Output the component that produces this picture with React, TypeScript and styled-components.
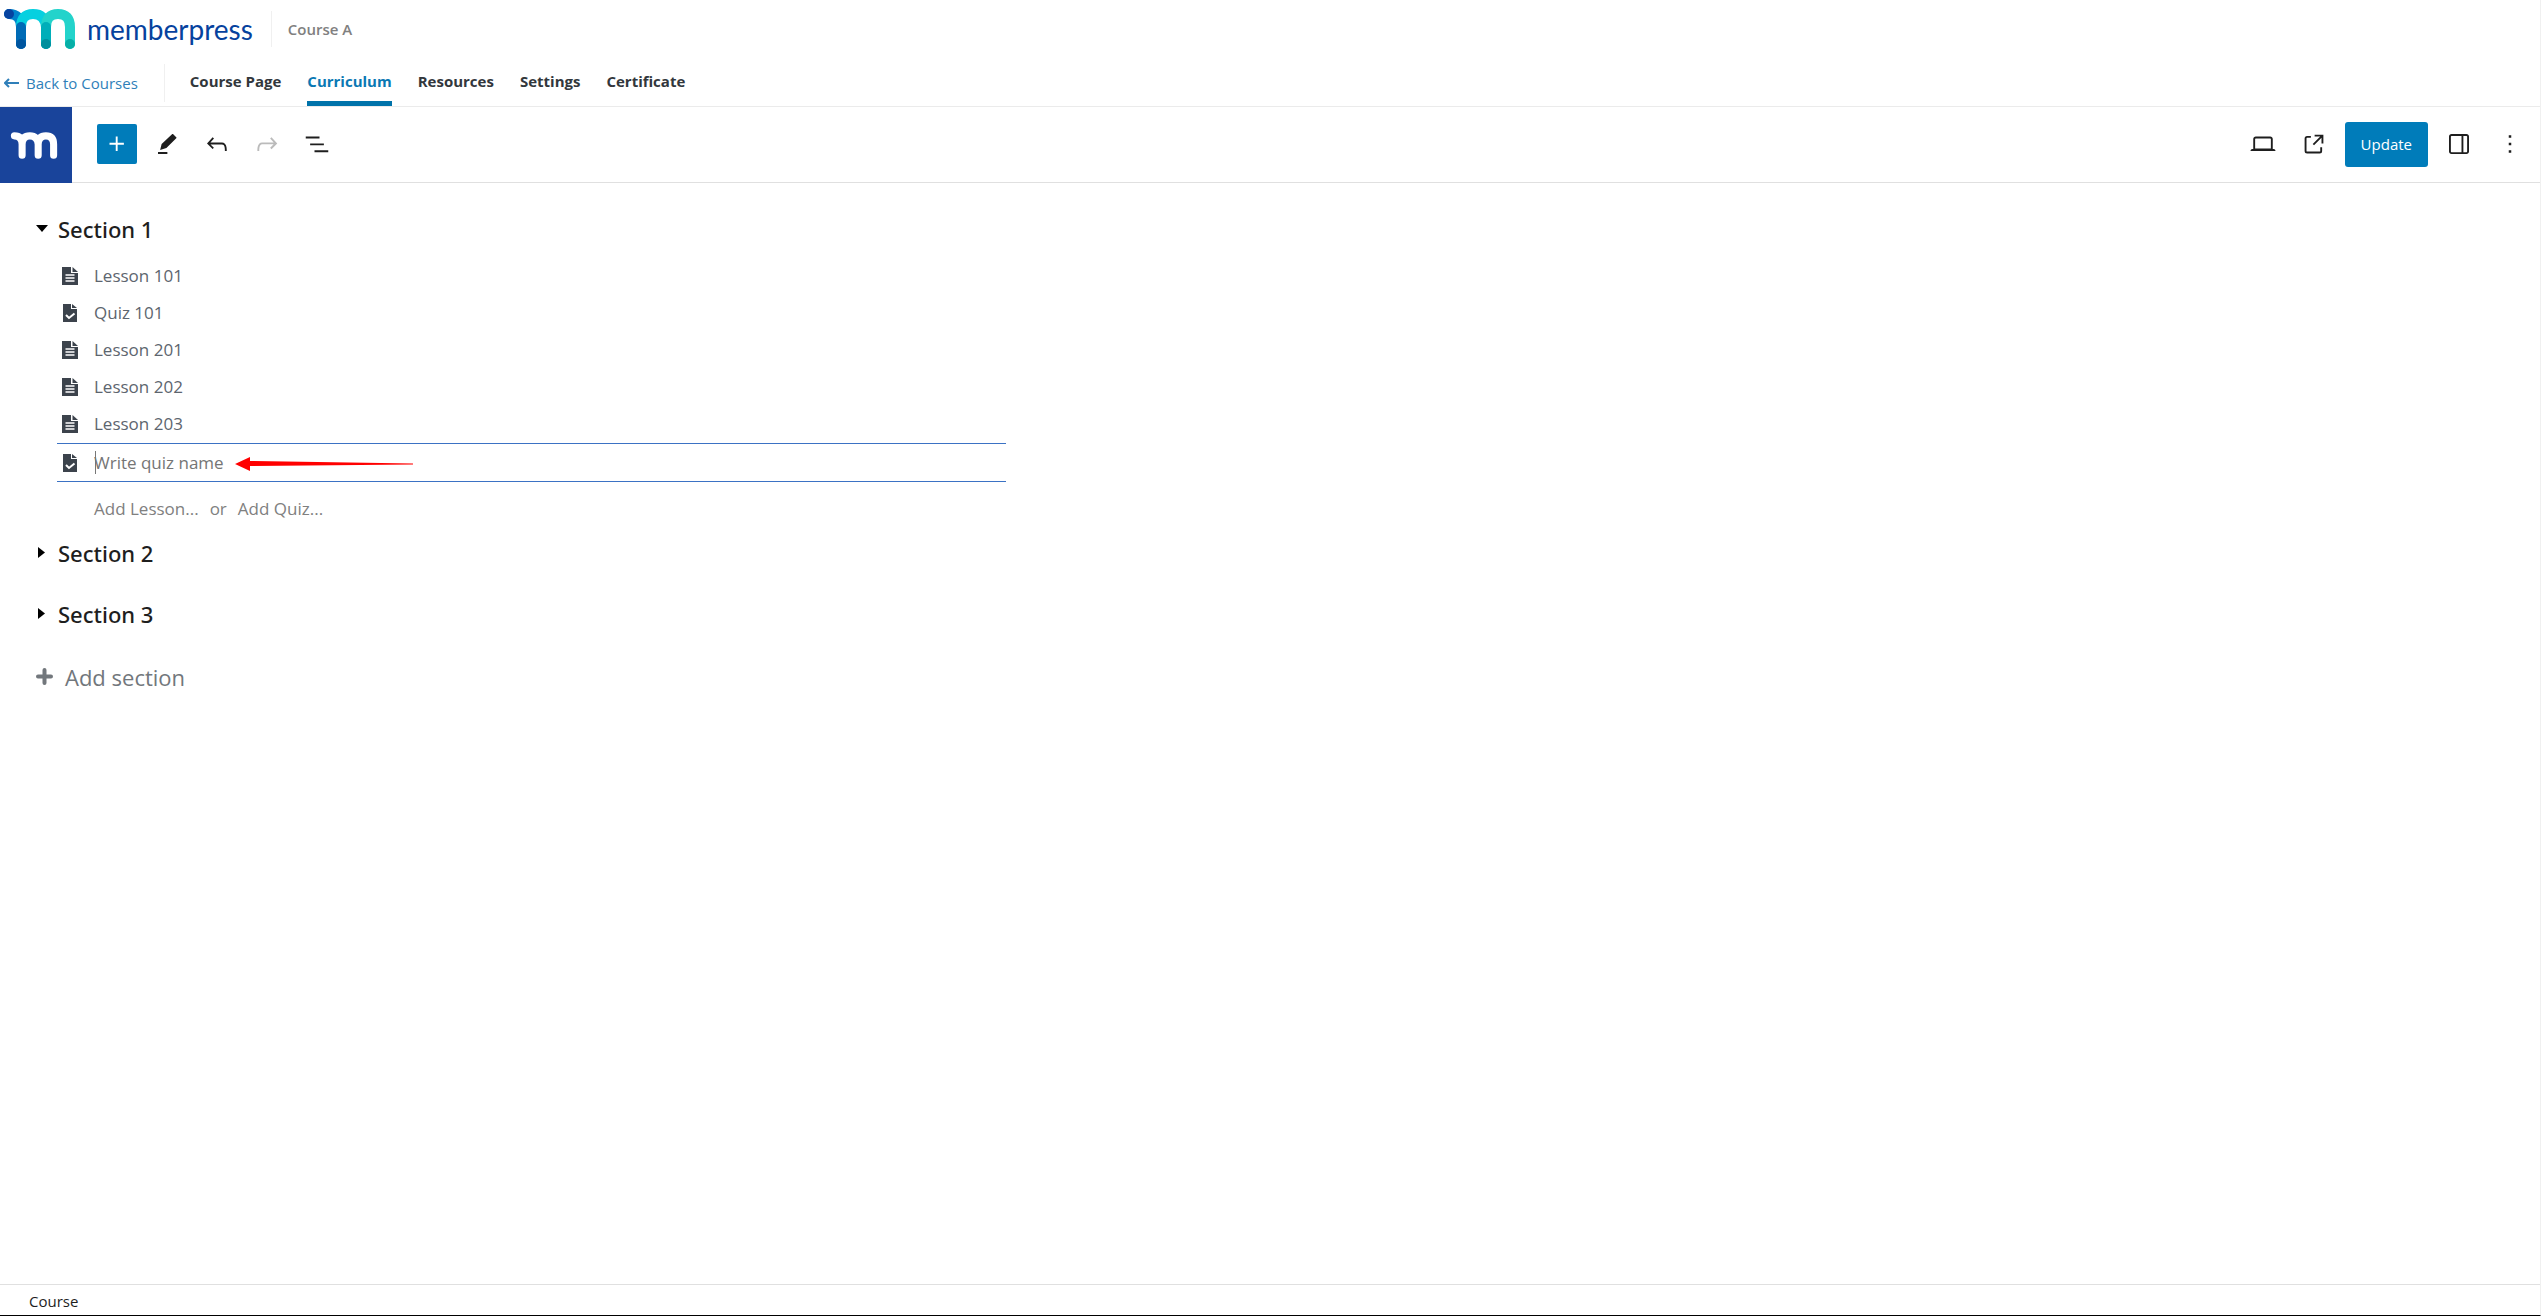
import React, { useState } from 'react';
import styled, { createGlobalStyle } from 'styled-components';

const Global = createGlobalStyle`
  * { box-sizing: border-box; }
  html, body { margin: 0; }
  body {
    background: #fff;
    color: #1e1e1e;
    font-family: 'Open Sans', 'Noto Sans', sans-serif;
    font-size: 15px;
  }
  button, input { font: inherit; }
  button { border: 0; padding: 0; background: none; color: inherit; cursor: pointer; }
  a { text-decoration: none; color: inherit; }
  svg { display: block; flex: none; }
`;

const Page = styled.div`
  display: flex;
  flex-direction: column;
  min-height: 100vh;
  border-right: 1px solid #f0f0f0;
  border-bottom: 1px solid #000;
`;

const BrandBar = styled.header`
  display: flex;
  align-items: center;
  height: 58px;
  padding-left: 3px;
`;

const Brand = styled.a`
  display: flex;
  align-items: center;
  gap: 11px;
  padding-right: 18px;
`;

const Wordmark = styled.span`
  font-family: Lato, sans-serif;
  font-size: 28px;
  line-height: 36px;
  color: #06429e;
`;

const CourseName = styled.span`
  border-left: 1px solid #f0f0f0;
  padding-left: 16px;
  font-weight: 600;
  line-height: 36px;
  color: #808080;
`;

const NavBar = styled.div`
  display: flex;
  height: 49px;
  border-bottom: 1px solid #ebebeb;
`;

const BackLink = styled.a`
  display: flex;
  align-items: center;
  gap: 7px;
  height: 38px;
  margin-top: 6px;
  padding: 0 26px 0 4px;
  border-right: 1px solid #f0f0f0;
  color: #2f7fb9;
`;

const Tabs = styled.nav`
  display: flex;
  gap: 26px;
  padding-left: 25px;
`;

const Tab = styled.a<{ $active?: boolean }>`
  border-bottom: 5px solid ${p => (p.$active ? '#0073aa' : 'transparent')};
  padding-top: 11px;
  line-height: 24px;
  font-weight: 700;
  color: ${p => (p.$active ? '#0a78b3' : '#32373c')};
`;

const Toolbar = styled.div`
  display: flex;
  align-items: flex-start;
  height: 76px;
  border-bottom: 1px solid #e0e0e0;
`;

const HomeLink = styled.a`
  display: flex;
  align-items: center;
  justify-content: center;
  width: 72px;
  height: 76px;
  padding-right: 4px;
  background: #19449b;
`;

const ToolGroup = styled.div<{ $end?: boolean }>`
  display: flex;
  align-items: center;
  height: 74px;
  gap: ${p => (p.$end ? '11px' : '10px')};
  margin-left: ${p => (p.$end ? 'auto' : '25px')};
  padding-right: ${p => (p.$end ? '10px' : '0')};
`;

const IconButton = styled.button<{ $primary?: boolean }>`
  display: flex;
  align-items: center;
  justify-content: center;
  width: 40px;
  height: 40px;
  border-radius: 2px;
  background: ${p => (p.$primary ? '#007cba' : 'none')};
  color: ${p => (p.$primary ? '#fff' : '#1e1e1e')};
  &:disabled { color: #bbb; cursor: default; }
`;

const UpdateButton = styled.button`
  height: 45px;
  padding: 0 16px;
  border-radius: 3px;
  background: #007cba;
  color: #fff;
`;

const Main = styled.main`
  flex: 1;
  padding: 27px 36px;
`;

const Curriculum = styled.div`
  max-width: 970px;
`;

const SectionHead = styled.h2<{ $open?: boolean }>`
  display: flex;
  align-items: center;
  height: 37px;
  margin: 0;
  margin-bottom: ${p => (p.$open ? '10px' : '24px')};
  font-family: 'Noto Sans', 'Open Sans', sans-serif;
  font-size: 22px;
  font-weight: 500;
`;

const Toggle = styled.button`
  display: flex;
  align-items: center;
  width: 22px;
  height: 24px;
`;

const Items = styled.ul`
  list-style: none;
  margin: 0;
  padding: 0 0 0 21px;
`;

const Item = styled.li`
  display: flex;
  align-items: center;
  gap: 16px;
  height: 37px;
  padding-left: 5px;
  font-size: 17px;
  color: #5d656e;
`;

const EditItem = styled(Item)`
  position: relative;
  height: 39px;
  margin-top: 1px;
  border: solid #3b72c4;
  border-width: 1px 0;
`;

const NameInput = styled.input`
  flex: 1;
  height: 37px;
  border: 0;
  outline: 0;
  padding: 0;
  background: linear-gradient(#777, #777) 1px 7px / 1px 23px no-repeat;
  color: #555d66;
  caret-color: transparent;
  &::placeholder { color: #757575; opacity: 1; }
`;

const Pointer = styled.svg`
  position: absolute;
  left: 178px;
  top: 11px;
`;

const AddRow = styled.div`
  display: flex;
  align-items: center;
  gap: 11px;
  height: 52px;
  padding-left: 58px;
  font-size: 17px;
  color: #808080;
`;

const AddSection = styled.button`
  display: flex;
  align-items: center;
  gap: 12px;
  height: 41px;
  font-size: 22px;
  color: #72777c;
`;

const Footer = styled.footer`
  height: 31px;
  border-top: 1px solid #e0e0e0;
  padding-left: 29px;
  line-height: 32px;
`;

const ICONS = {
  plus: 'M11 12.5V17.5H12.5V12.5H17.5V11H12.5V6H11V11H6V12.5H11Z',
  pencil: 'M17 4.2l2.4 2.3c.3.3.3.6 0 .9L11.5 15.2 6.500 16.800l1.200-4.800L16 4.200c.3-.3.7-.3 1 0zM4.800 18.400h7.500V20H4.800z',
  undo: 'M18.3 11.7c-.6-.6-1.4-.9-2.3-.9H6.7l2.9-3.3-1.1-1-4.5 5L8.5 16l1-1-2.7-2.7H16c.5 0 .9.2 1.3.5 1 1 1 3.4 1 4.5v.3h1.5v-.2c0-1.5 0-4.3-1.5-5.7z',
  redo: 'M15.6 6.5l-1.1 1 2.9 3.3H8c-.9 0-1.7.3-2.3.9-1.4 1.5-1.4 4.2-1.4 5.6v.2h1.5v-.3c0-1.1 0-3.5 1-4.5.3-.3.7-.5 1.3-.5h9.2L14.5 15l1.1 1.1 4.6-4.6-4.6-5z',
  list: 'M3 6h11v1.5H3V6Zm3.5 5.5h11V13h-11v-1.5ZM21 17H10v1.5h11V17Z',
  laptop: 'M20.5 16h-.7V8c0-1.1-.9-2-2-2H6.2c-1.1 0-2 .9-2 2v8h-.7c-.8 0-1.5.7-1.5 1.5h20c0-.8-.7-1.5-1.5-1.5zM5.7 8c0-.3.2-.5.5-.5h11.6c.3 0 .5.2.5.5v7.6H5.7V8z',
  external: 'M19.5 4.5h-7V6h4.44l-5.97 5.97 1.06 1.06L18 7.06v4.44h1.5v-7Zm-13 1a2 2 0 0 0-2 2v10a2 2 0 0 0 2 2h10a2 2 0 0 0 2-2v-3H17v3a.5.5 0 0 1-.5.5h-10a.5.5 0 0 1-.5-.5v-10a.5.5 0 0 1 .5-.5h3V5.5h-3Z',
  sidebar: 'M18 4H6c-1.1 0-2 .9-2 2v12c0 1.1.9 2 2 2h12c1.1 0 2-.9 2-2V6c0-1.1-.9-2-2-2zm-4 14.5H6c-.3 0-.5-.2-.5-.5V6c0-.3.2-.5.5-.5h8v13zm4.5-.5c0 .3-.2.5-.5.5h-2.5v-13H18c.3 0 .5.2.5.5v12z',
  more: 'M13 19h-2v-2h2v2zm0-6h-2v-2h2v2zm0-6h-2V5h2v2z',
};

const Icon = ({ name }: { name: keyof typeof ICONS }) => (
  <svg width="30" height="30" viewBox="0 0 24 24" fill="currentColor" aria-hidden="true">
    <path d={ICONS[name]} />
  </svg>
);

const FileIcon = ({ kind }: { kind: string }) => (
  <svg width="16" height="18" viewBox="0 0 16 18" aria-hidden="true">
    <path d={kind === 'quiz' ? 'M1 0h8v5h6v13H1z' : 'M0 0h9v6h7v12H0z'} fill="#3c434c" />
    <path d={kind === 'quiz' ? 'M10 0l5 4h-5z' : 'M10.5 0L16 5h-5.5z'} fill="#3c434c" />
    {kind === 'quiz'
      ? <path d="M4 11l3 3 5.5-4.5" fill="none" stroke="#fff" strokeWidth="2" />
      : <path d="M3.5 8h9M3.5 11h9M3.5 14h9" stroke="#fff" strokeWidth="1.3" />}
  </svg>
);

const BrandLogo = () => (
  <svg width="73" height="42" viewBox="0 0 73 42" fill="none" strokeWidth="10" strokeLinecap="round" aria-hidden="true">
    <path d="M18 36V19Q18 6 6 6" stroke="#0083cb" />
    <path d="M18 19Q18 6 30 6T43 19V36" stroke="#06d0e0" />
    <path d="M43 19Q43 6 55 6T67 19V36" stroke="#23d3cb" />
    <path d="M18 36V19" stroke="#006bb6" />
    <path d="M43 36V19" stroke="#00aeb9" />
    <path d="M6 6h0" stroke="#0643a0" />
    <path d="M18 36h0" stroke="#00559f" />
    <path d="M43 36h0" stroke="#008f9d" />
    <path d="M67 36h0" stroke="#06afa7" />
  </svg>
);

const HomeLogo = () => (
  <svg width="48" height="27" viewBox="0 0 73 42" fill="none" stroke="#fff" strokeWidth="11" strokeLinecap="round" aria-hidden="true">
    <path d="M6 6Q18 6 18 19V36M18 19Q18 6 30 6T43 19V36M43 19Q43 6 55 6T67 19V36" />
  </svg>
);

const Caret = ({ open }: { open?: boolean }) => (
  <svg width="12" height="12" viewBox="0 0 12 12" aria-hidden="true">
    <path d={open ? 'M0 2h12L6 9z' : 'M2 0l7 5.5L2 11z'} fill="#000" />
  </svg>
);

const LESSONS = [
  { kind: 'lesson', name: 'Lesson 101' },
  { kind: 'quiz', name: 'Quiz 101' },
  { kind: 'lesson', name: 'Lesson 201' },
  { kind: 'lesson', name: 'Lesson 202' },
  { kind: 'lesson', name: 'Lesson 203' },
];

const TABS = ['Course Page', 'Curriculum', 'Resources', 'Settings', 'Certificate'];

export default function App() {
  const [quizName, setQuizName] = useState('');
  return (
    <Page>
      <Global />
      <BrandBar>
        <Brand href="#home"><BrandLogo /><Wordmark>memberpress</Wordmark></Brand>
        <CourseName>Course A</CourseName>
      </BrandBar>
      <NavBar>
        <BackLink href="#courses">
          <svg width="15" height="10" viewBox="0 0 15 10" fill="none" stroke="currentColor" strokeWidth="2" aria-hidden="true">
            <path d="M15 5H2M5 1L1 5l4 4" />
          </svg>
          Back to Courses
        </BackLink>
        <Tabs>
          {TABS.map(t => <Tab key={t} href="#tab" $active={t === 'Curriculum'}>{t}</Tab>)}
        </Tabs>
      </NavBar>
      <Toolbar>
        <HomeLink href="#dashboard" aria-label="Dashboard"><HomeLogo /></HomeLink>
        <ToolGroup>
          <IconButton $primary aria-label="Add block"><Icon name="plus" /></IconButton>
          <IconButton aria-label="Tools"><Icon name="pencil" /></IconButton>
          <IconButton aria-label="Undo"><Icon name="undo" /></IconButton>
          <IconButton aria-label="Redo" disabled><Icon name="redo" /></IconButton>
          <IconButton aria-label="List view"><Icon name="list" /></IconButton>
        </ToolGroup>
        <ToolGroup $end>
          <IconButton aria-label="Preview"><Icon name="laptop" /></IconButton>
          <IconButton aria-label="View course"><Icon name="external" /></IconButton>
          <UpdateButton>Update</UpdateButton>
          <IconButton aria-label="Settings panel"><Icon name="sidebar" /></IconButton>
          <IconButton aria-label="Options"><Icon name="more" /></IconButton>
        </ToolGroup>
      </Toolbar>
      <Main>
        <Curriculum>
          <SectionHead $open><Toggle aria-label="Collapse Section 1"><Caret open /></Toggle>Section 1</SectionHead>
          <Items>
            {LESSONS.map(l => <Item key={l.name}><FileIcon kind={l.kind} />{l.name}</Item>)}
            <EditItem>
              <FileIcon kind="quiz" />
              <NameInput
                aria-label="Quiz name"
                placeholder="Write quiz name"
                value={quizName}
                onChange={e => setQuizName(e.target.value)}
              />
              <Pointer width="180" height="18" viewBox="0 0 180 18" aria-hidden="true">
                <path d="M0 9L15 2v4l163 2.5v1L15 11v5z" fill="#f00" />
              </Pointer>
            </EditItem>
          </Items>
          <AddRow><button>Add Lesson...</button><span>or</span><button>Add Quiz...</button></AddRow>
          <SectionHead><Toggle aria-label="Expand Section 2"><Caret /></Toggle>Section 2</SectionHead>
          <SectionHead><Toggle aria-label="Expand Section 3"><Caret /></Toggle>Section 3</SectionHead>
          <AddSection>
            <svg width="17" height="17" viewBox="0 0 17 17" stroke="currentColor" strokeWidth="4" strokeLinecap="round" aria-hidden="true">
              <path d="M8.5 2v13M2 8.5h13" />
            </svg>
            Add section
          </AddSection>
        </Curriculum>
      </Main>
      <Footer>Course</Footer>
    </Page>
  );
}
